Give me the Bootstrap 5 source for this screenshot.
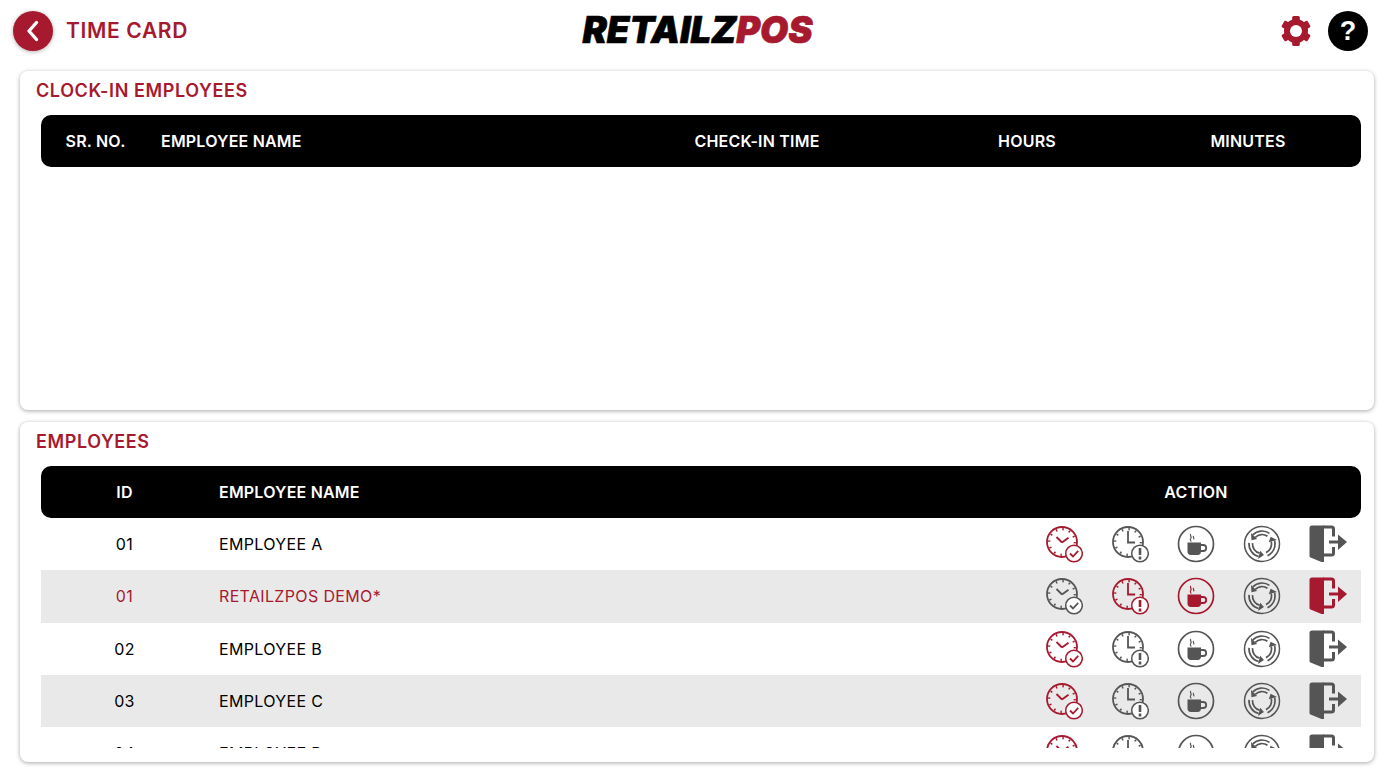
<!DOCTYPE html>
<html lang="en">
<head>
    <meta charset="UTF-8">
    <meta name="viewport" content="width=device-width, initial-scale=1.0">
    <title>Time Card - RetailzPOS</title>
    <link href="https://cdn.jsdelivr.net/npm/bootstrap@5.3.0/dist/css/bootstrap.min.css" rel="stylesheet">
    <style>
        html, body { height: 100%; overflow: hidden; }
        body { background: #fff; font-family: Inter, "Liberation Sans", sans-serif; color: #000; }
        .tc-red { color: #a6192e; }
        .tc-grey { color: #555; }
        .tc-top { height: 71px; padding: 1px 23px 11px 13px; }
        .tc-side { flex: 1 1 0; }
        .tc-round { width: 40px; height: 40px; border-radius: 50%; border: 0; padding: 0; }
        .tc-back { background: #a6192e; box-shadow: 0 1px 4px rgba(0,0,0,.3); }
        .tc-help { background: #000; color: #fff; font: 700 27px/40px "Liberation Sans", sans-serif; }
        .tc-pagetitle { font-size: 21px; font-weight: 600; letter-spacing: .65px; margin: 0 0 0 13px; }
        .tc-logo { font: italic 900 36.5px/1 Inter, "Liberation Sans", sans-serif; letter-spacing: -.1px; -webkit-text-stroke: .6px currentColor; padding-left: 14px; }
        .tc-panel { margin: 0 17px 12px 20px; height: 339px; border: 0; border-radius: 8px; box-shadow: 0 1px 4px rgba(0,0,0,.35); padding: 0 13px 0 21px; }
        .tc-panel + .tc-panel { height: 340px; }
        .tc-paneltitle { font-size: 18px; font-weight: 600; letter-spacing: .6px; line-height: 22px; margin: 9px 0 13px -5px; }
        .tc-head { background: #000; color: #fff; height: 52px; border-radius: 10px; font-size: 16px; font-weight: 600; letter-spacing: .2px; align-items: center; }
        .tc-clockgrid { display: grid; grid-template-columns: 109px 472px 270px 270px 172px; }
        .tc-id { width: 167px; text-align: center; }
        .tc-name { padding-left: 11px; }
        .tc-actions { width: 330px; }
        .tc-cell { width: 66px; text-align: center; }
        .tc-scroll { height: 230px; overflow: hidden; }
        .tc-row { height: 52.25px; font-size: 16px; font-weight: 400; letter-spacing: .35px; }
        .tc-row:nth-child(even) { background: #e9e9e9; }
        .tc-ico { width: 38px; height: 38px; display: block; margin: 0 auto; }
    </style>
</head>
<body>
    <!-- icon sprites -->
    <svg width="0" height="0" class="position-absolute">
        <defs>
            <g id="clockface" fill="none" stroke="currentColor">
                <circle cx="17" cy="17" r="15" stroke-width="1.8"/>
                <circle cx="17" cy="17" r="12.8" stroke-width="2.2" stroke-dasharray="1.5 5.2"/>
            </g>
            <symbol id="ico-clockin" viewBox="0 0 38 38">
                <use href="#clockface"/>
                <path d="M17 17.5 11.5 12M17 17.5l6.500-4.800" fill="none" stroke="currentColor" stroke-width="1.8"/>
                <circle cx="29" cy="28.500" r="8.300" fill="#fff" stroke="currentColor" stroke-width="1.500"/>
                <path d="M25 28.500l3 3 5.200-5.600" fill="none" stroke="currentColor" stroke-width="1.800"/>
            </symbol>
            <symbol id="ico-clockout" viewBox="0 0 38 38">
                <use href="#clockface"/>
                <path d="M17 6v11.500h7" fill="none" stroke="currentColor" stroke-width="1.800"/>
                <circle cx="29" cy="28.500" r="8.300" fill="#fff" stroke="currentColor" stroke-width="1.500"/>
                <path d="M29 23v7M29 31.500v3" fill="none" stroke="currentColor" stroke-width="2.600"/>
            </symbol>
            <symbol id="ico-break" viewBox="0 0 38 38">
                <circle cx="19" cy="19" r="17.500" fill="none" stroke="currentColor" stroke-width="1.700"/>
                <path d="M10.500 17.500h13.500v9a3.400 3.400 0 0 1-3.400 3.400h-6.700a3.400 3.400 0 0 1-3.400-3.400z" fill="currentColor"/>
                <path d="M24 20h2.200a2.400 2.400 0 0 1 0 6H24" fill="none" stroke="currentColor" stroke-width="1.800"/>
                <path d="M13.800 9c-1.400 1.600 1.400 2.600 0 4.400s.6 2.200 0 3.200M16.600 11c-1 1.200 1 2.200 0 3.400" fill="none" stroke="currentColor" stroke-width="1.200"/>
            </symbol>
            <g id="shiftband" stroke="currentColor">
                <path d="M26.460 8.350A13 13 0 0 0 9.810 9.810M24.450 11.220A9.500 9.500 0 0 0 12.280 12.280" fill="none" stroke-width="1.700"/>
                <path d="M8.040 8.040 14.050 14.050 8.430 15.150z" fill="currentColor" stroke="none"/>
            </g>
            <symbol id="ico-shift" viewBox="0 0 38 38">
                <circle cx="19" cy="19" r="17.500" fill="none" stroke="currentColor" stroke-width="1.500"/>
                <use href="#shiftband"/>
                <use href="#shiftband" transform="rotate(120 19 19)"/>
                <use href="#shiftband" transform="rotate(240 19 19)"/>
            </symbol>
            <symbol id="ico-exit" viewBox="0 0 38 38">
                <path d="M3 .5h12v36.500h-2.500L1.500 32.500a1.500 1.500 0 0 1-1-1.400V3A2.500 2.500 0 0 1 3 .5z" fill="currentColor"/>
                <path d="M14 2h8.500a2 2 0 0 1 2 2v7.500M24.500 22v6a2 2 0 0 1-2 2H14" fill="none" stroke="currentColor" stroke-width="3"/>
                <path d="M20 17h10" stroke="currentColor" stroke-width="3"/>
                <path d="M29 9.500 38 17l-9 8z" fill="currentColor"/>
            </symbol>
        </defs>
    </svg>

    <div class="tc-top d-flex align-items-center">
        <div class="tc-side d-flex align-items-center">
            <button class="tc-round tc-back d-flex align-items-center justify-content-center" type="button" aria-label="Back">
                <svg width="14" height="22" viewBox="0 0 14 22"><path d="M10.500 2.500 3 11l7.500 8.500" fill="none" stroke="#fff" stroke-width="3.400" stroke-linecap="round" stroke-linejoin="round"/></svg>
            </button>
            <h1 class="tc-pagetitle tc-red">TIME CARD</h1>
        </div>
        <div class="tc-logo">RETAILZ<span class="tc-red">POS</span></div>
        <div class="tc-side d-flex align-items-center justify-content-end gap-3">
            <svg width="32" height="32" viewBox="0 0 32 32" class="tc-red" aria-label="Settings">
                <g fill="currentColor">
                    <rect x="12.200" y="1" width="7.600" height="30" rx="1.500"/>
                    <rect x="12.200" y="1" width="7.600" height="30" rx="1.500" transform="rotate(60 16 16)"/>
                    <rect x="12.200" y="1" width="7.600" height="30" rx="1.500" transform="rotate(120 16 16)"/>
                </g>
                <circle cx="16" cy="16" r="9" fill="none" stroke="currentColor" stroke-width="6"/>
                <circle cx="16" cy="16" r="6" fill="#fff"/>
            </svg>
            <button class="tc-round tc-help text-center" type="button" aria-label="Help">?</button>
        </div>
    </div>

    <div class="card tc-panel">
        <h2 class="tc-paneltitle tc-red">CLOCK-IN EMPLOYEES</h2>
        <div class="tc-head tc-clockgrid">
            <div class="text-center">SR. NO.</div>
            <div class="tc-name">EMPLOYEE NAME</div>
            <div class="text-center">CHECK-IN TIME</div>
            <div class="text-center">HOURS</div>
            <div class="text-center">MINUTES</div>
        </div>
    </div>

    <div class="card tc-panel">
        <h2 class="tc-paneltitle tc-red">EMPLOYEES</h2>
        <div class="tc-head d-flex">
            <div class="tc-id">ID</div>
            <div class="tc-name flex-grow-1">EMPLOYEE NAME</div>
            <div class="tc-actions text-center">ACTION</div>
        </div>
        <div class="tc-scroll" id="rows"></div>
    </div>

    <script src="https://cdn.jsdelivr.net/npm/bootstrap@5.3.0/dist/js/bootstrap.bundle.min.js"></script>
    <script>
        // on = which action icons are red for this employee
        const employees = [
            { id: '01', name: 'EMPLOYEE A', on: [0] },
            { id: '01', name: 'RETAILZPOS DEMO*', on: [1, 2, 4], active: true },
            { id: '02', name: 'EMPLOYEE B', on: [0] },
            { id: '03', name: 'EMPLOYEE C', on: [0] },
            { id: '04', name: 'EMPLOYEE D', on: [0] }
        ];
        const actions = ['ico-clockin', 'ico-clockout', 'ico-break', 'ico-shift', 'ico-exit'];

        document.getElementById('rows').innerHTML = employees.map(emp => `
            <div class="tc-row d-flex align-items-center ${emp.active ? 'tc-red' : ''}">
                <div class="tc-id">${emp.id}</div>
                <div class="tc-name flex-grow-1">${emp.name}</div>
                <div class="tc-actions d-flex">
                    ${actions.map((ico, i) => `
                        <div class="tc-cell ${emp.on.includes(i) ? 'tc-red' : 'tc-grey'}">
                            <svg class="tc-ico"><use href="#${ico}"/></svg>
                        </div>`).join('')}
                </div>
            </div>`).join('');
    </script>
</body>
</html>
